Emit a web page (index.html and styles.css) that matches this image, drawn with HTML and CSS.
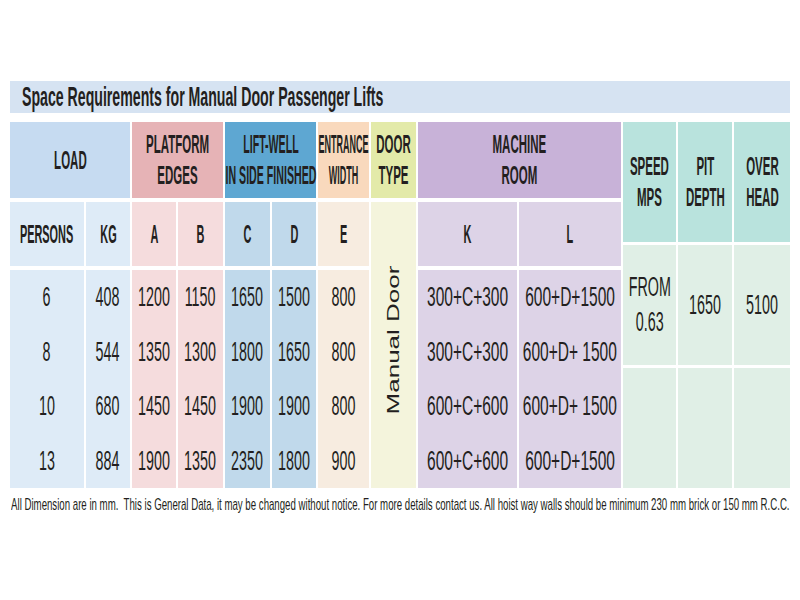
FILE: index.html
```html
<!DOCTYPE html>
<html lang="en">
<head>
<meta charset="utf-8">
<title>Space Requirements for Manual Door Passenger Lifts</title>
<link rel="stylesheet" href="styles.css">
</head>
<body>
<div class="page">
  <div class="title"><span class="sq st">Space Requirements for Manual Door Passenger Lifts</span></div>

  <div class="table">
    <div class="grid left">
      <div class="cell h c-load span2"><span class="sq sh">LOAD</span></div>
      <div class="cell h c-plat span2"><span class="sq sh">PLATFORM<br>EDGES</span></div>
      <div class="cell h c-lift span2"><span class="sq sh tight">LIFT-WELL<br>IN SIDE FINISHED</span></div>
      <div class="cell h c-ent"><span class="sq sh narrow">ENTRANCE<br>WIDTH</span></div>
      <div class="cell h c-door"><span class="sq sh">DOOR<br>TYPE</span></div>
      <div class="cell h c-mach span2"><span class="sq sh">MACHINE<br>ROOM</span></div>

      <div class="cell s l-load"><span class="sq ss">PERSONS</span></div>
      <div class="cell s l-load"><span class="sq ss">KG</span></div>
      <div class="cell s l-plat"><span class="sq ss">A</span></div>
      <div class="cell s l-plat"><span class="sq ss">B</span></div>
      <div class="cell s l-lift"><span class="sq ss">C</span></div>
      <div class="cell s l-lift"><span class="sq ss">D</span></div>
      <div class="cell s l-ent"><span class="sq ss">E</span></div>
      <div class="cell door-body l-door"><span class="vert">Manual Door</span></div>
      <div class="cell s l-mach"><span class="sq ss">K</span></div>
      <div class="cell s l-mach"><span class="sq ss">L</span></div>

      <div class="cell b l-load"><span class="sq sb">6</span><span class="sq sb">8</span><span class="sq sb">10</span><span class="sq sb">13</span></div>
      <div class="cell b l-load"><span class="sq sb">408</span><span class="sq sb">544</span><span class="sq sb">680</span><span class="sq sb">884</span></div>
      <div class="cell b l-plat"><span class="sq sb">1200</span><span class="sq sb">1350</span><span class="sq sb">1450</span><span class="sq sb">1900</span></div>
      <div class="cell b l-plat"><span class="sq sb">1150</span><span class="sq sb">1300</span><span class="sq sb">1450</span><span class="sq sb">1350</span></div>
      <div class="cell b l-lift"><span class="sq sb">1650</span><span class="sq sb">1800</span><span class="sq sb">1900</span><span class="sq sb">2350</span></div>
      <div class="cell b l-lift"><span class="sq sb">1500</span><span class="sq sb">1650</span><span class="sq sb">1900</span><span class="sq sb">1800</span></div>
      <div class="cell b l-ent"><span class="sq sb">800</span><span class="sq sb">800</span><span class="sq sb">800</span><span class="sq sb">900</span></div>
      <div class="cell b l-mach"><span class="sq sb wide">300+C+300</span><span class="sq sb wide">300+C+300</span><span class="sq sb wide">600+C+600</span><span class="sq sb wide">600+C+600</span></div>
      <div class="cell b l-mach"><span class="sq sb wide">600+D+1500</span><span class="sq sb wide">600+D+ 1500</span><span class="sq sb wide">600+D+ 1500</span><span class="sq sb wide">600+D+1500</span></div>
    </div>

    <div class="grid right">
      <div class="cell rh"><span class="sq sh">SPEED<br>MPS</span></div>
      <div class="cell rh"><span class="sq sh">PIT<br>DEPTH</span></div>
      <div class="cell rh"><span class="sq sh">OVER<br>HEAD</span></div>
      <div class="cell rb"><span class="sq sb two">FROM<br>0.63</span></div>
      <div class="cell rb"><span class="sq sb">1650</span></div>
      <div class="cell rb"><span class="sq sb">5100</span></div>
      <div class="cell rb"></div>
      <div class="cell rb"></div>
      <div class="cell rb"></div>
    </div>
  </div>

  <p class="note"><span class="sq sn">All Dimension are in mm.&nbsp; This is General Data, it may be changed without notice. For more details contact us. All hoist way walls should be minimum 230 mm brick or 150 mm R.C.C.</span></p>
</div>
</body>
</html>
```

FILE: styles.css
```css
html, body {
  margin: 0;
  padding: 0;
  background: #ffffff;
  overflow: hidden;
}

body {
  font-family: "Liberation Sans", Arial, sans-serif;
  color: #231f20;
}

.page {
  width: 780px;
  padding: 81px 10px 0 10px;
}

.title {
  height: 32px;
  background: #d6e3f2;
  display: flex;
  align-items: center;
  padding-left: 12px;
  overflow: visible;
}

.sq {
  display: inline-block;
  white-space: nowrap;
  transform-origin: center center;
  flex-shrink: 0;
}

.st {
  font-weight: bold;
  font-size: 28px;
  line-height: 32px;
  transform: scaleX(0.505);
  transform-origin: left center;
}

.table {
  display: flex;
  gap: 2px;
  margin-top: 9px;
}

.grid {
  display: grid;
}

.left {
  grid-template-columns: 74px 44px 44px 45px 45px 44px 51px 45px 99px 102px;
  grid-template-rows: 76px 64px 218px;
  column-gap: 2px;
  row-gap: 4px;
}

.right {
  grid-template-columns: 53px 54px 56px;
  grid-template-rows: 120px 120px 120px;
  column-gap: 2px;
  row-gap: 3px;
}

.cell {
  display: flex;
  align-items: center;
  justify-content: center;
  text-align: center;
  min-width: 0;
}

.span2 {
  grid-column: span 2;
}

.sh {
  font-weight: bold;
  font-size: 25px;
  line-height: 31px;
  transform: scaleX(0.46);
}

.sh.tight {
  transform: scaleX(0.425);
}

.sh.narrow {
  transform: scaleX(0.36);
}

.ss {
  font-weight: bold;
  font-size: 26px;
  line-height: 30px;
  transform: scaleX(0.42);
}

.sb {
  font-size: 27px;
  line-height: 34px;
  transform: scaleX(0.53);
}

.sb.wide {
  transform: scaleX(0.575);
}

.two {
  line-height: 35px;
}

.b {
  flex-direction: column;
  justify-content: space-around;
  padding: 0;
}

.b .sb {
  height: 54.5px;
  line-height: 54.5px;
}

.door-body {
  grid-row: span 2;
  padding-bottom: 10px;
}

.vert {
  display: inline-block;
  white-space: nowrap;
  flex-shrink: 0;
  font-size: 26px;
  line-height: 30px;
  transform: rotate(-90deg) scaleY(0.6);
}

/* header colours */
.c-load { background: #c6dbf1; }
.c-plat { background: #e6b3b6; }
.c-lift { background: #5ea7d2; }
.c-ent  { background: #f9d9bd; }
.c-door { background: #e3eaa9; }
.c-mach { background: #c8b2d8; }

/* light colours */
.l-load { background: #deebf7; }
.l-plat { background: #f5dcdd; }
.l-lift { background: #c0d9eb; }
.l-ent  { background: #f7ece0; }
.l-door { background: #f4f4dc; }
.l-mach { background: #ddd3e7; }

.rh { background: #b9e3dd; }
.rb { background: #e0efe6; }

.note {
  margin: 7px 0 0 0;
  height: 20px;
  display: flex;
  justify-content: center;
  align-items: center;
}

.sn {
  font-size: 17px;
  line-height: 20px;
  transform: scaleX(0.568);
}
```
